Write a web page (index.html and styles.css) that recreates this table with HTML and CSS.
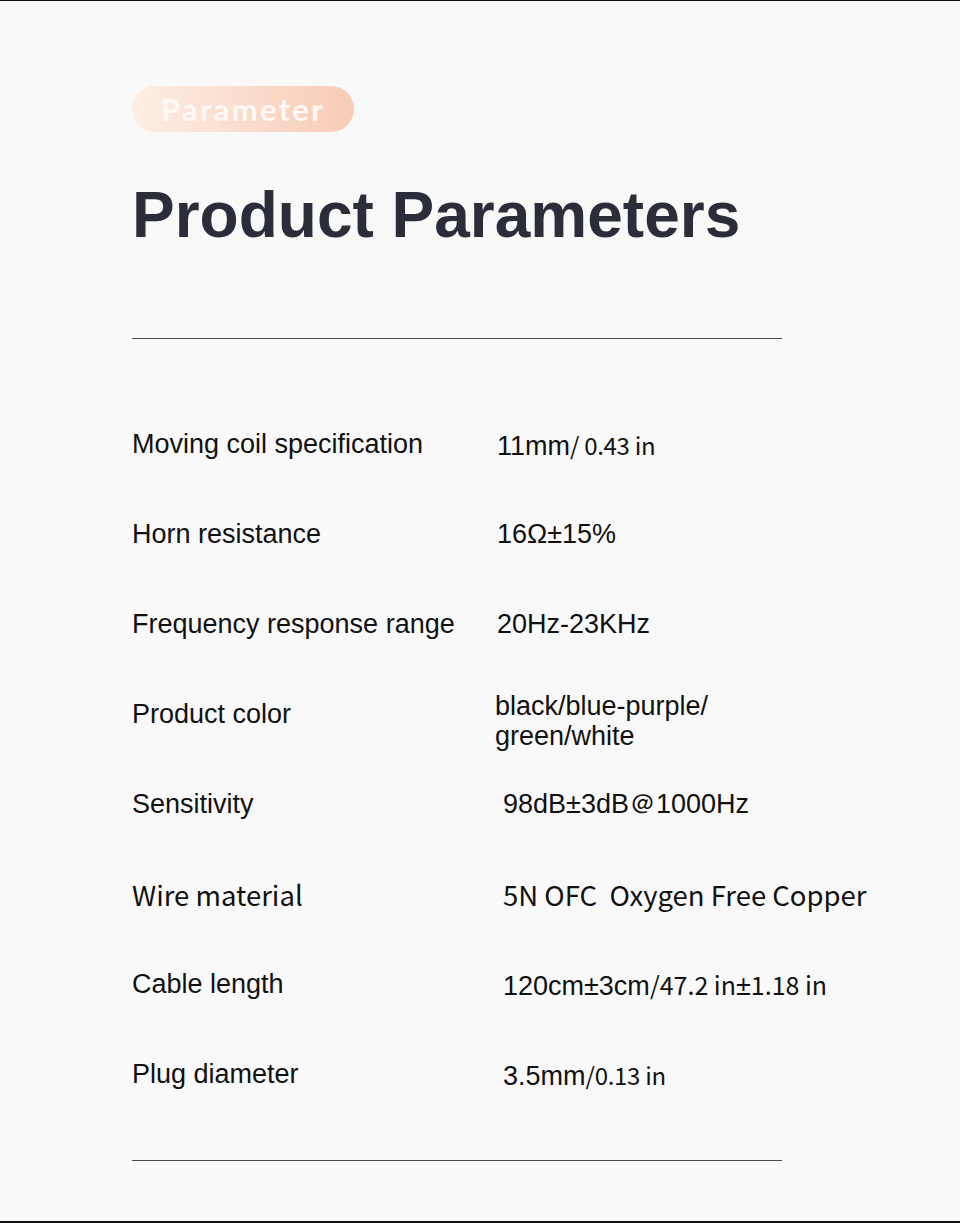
FILE: index.html
```html
<!DOCTYPE html>
<html lang="en">
<head>
<meta charset="utf-8">
<title>Product Parameters</title>
<link rel="stylesheet" href="styles.css">
</head>
<body>
<div class="page">
  <div class="badge"><span>Parameter</span></div>
  <h1 class="title">Product Parameters</h1>
  <div class="divider top-divider"></div>
  <div class="rows">
    <div class="row"><div class="label">Moving coil specification</div><div class="value">11mm<span class="cjk-sm">/ 0.43 in</span></div></div>
    <div class="row"><div class="label">Horn resistance</div><div class="value">16Ω±15%</div></div>
    <div class="row"><div class="label">Frequency response range</div><div class="value">20Hz-23KHz</div></div>
    <div class="row"><div class="label">Product color</div><div class="value value-multi">black/blue-purple/<br>green/white</div></div>
    <div class="row"><div class="label">Sensitivity</div><div class="value shift">98dB±3dB＠1000Hz</div></div>
    <div class="row"><div class="label cjk">Wire material</div><div class="value shift cjk">5N OFC&nbsp; Oxygen Free Copper</div></div>
    <div class="row"><div class="label">Cable length</div><div class="value shift">120cm±3cm<span class="cjk-sm cjk-wide">/47.2 in</span>±<span class="cjk-sm cjk-wide">1.18 in</span></div></div>
    <div class="row"><div class="label">Plug diameter</div><div class="value shift">3.5mm<span class="cjk-sm">/0.13 in</span></div></div>
  </div>
  <div class="divider bottom-divider"></div>
</div>
</body>
</html>
```

FILE: styles.css
```css
html, body {
  margin: 0;
  padding: 0;
}
body {
  background: #f9f9f9;
  font-family: "Liberation Sans", Arial, sans-serif;
  color: #111;
}
.page {
  box-sizing: border-box;
  height: 1223px;
  border-top: 1px solid #111;
  border-bottom: 2px solid #111;
  padding: 85px 0 0 132px;
}
.badge {
  width: 222px;
  height: 46px;
  border-radius: 23px;
  background: linear-gradient(90deg, #fdeee4 0%, #fad9c8 60%, #f8ccb6 100%);
  display: flex;
  align-items: center;
  justify-content: center;
}
.badge span {
  font-family: "Lato", "Noto Sans", sans-serif;
  font-weight: 700;
  font-size: 31px;
  letter-spacing: 2.3px;
  color: #fff9f5;
}
.title {
  margin: 43px 0 0 0;
  font-family: "Liberation Sans", Arial, sans-serif;
  font-weight: 700;
  font-size: 64px;
  line-height: 80px;
  color: #2b2d38;
}
.divider {
  width: 650px;
  height: 1px;
  background: #4a4a4a;
}
.top-divider {
  margin-top: 83px;
}
.rows {
  margin-top: 60px;
  display: flex;
  flex-direction: column;
}
.row {
  height: 90px;
  display: grid;
  grid-template-columns: 365px auto;
  align-items: center;
  font-size: 27px;
}
.label {
  color: #111;
}
.value {
  color: #111;
}
.value-multi {
  line-height: 30px;
  margin-left: -2px;
  margin-top: 14px;
}
.shift {
  padding-left: 6px;
}
.cjk {
  font-family: "Noto Sans CJK SC", "Noto Sans", sans-serif;
  font-size: 27.5px;
  letter-spacing: 0;
}
.cjk-sm {
  font-family: "Noto Sans CJK SC", "Noto Sans", sans-serif;
  font-size: 24px;
  letter-spacing: -0.3px;
}
.cjk-wide {
  font-size: 25px;
  letter-spacing: 0;
}
.bottom-divider {
  margin-top: 41px;
}
```
